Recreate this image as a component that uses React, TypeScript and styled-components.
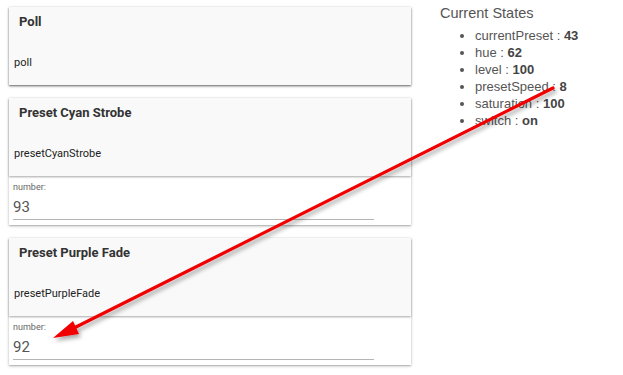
import styled, { createGlobalStyle } from "styled-components";

const GlobalStyle = createGlobalStyle`
  body {
    margin: 0;
    background: #ffffff;
    font-family: Roboto, "Liberation Sans", sans-serif;
  }
`;

const commands = [
  { title: "Poll", name: "poll" },
  { title: "Preset Cyan Strobe", name: "presetCyanStrobe", value: "93" },
  { title: "Preset Purple Fade", name: "presetPurpleFade", value: "92" },
];

const states = [
  { key: "currentPreset", value: "43" },
  { key: "hue", value: "62" },
  { key: "level", value: "100" },
  { key: "presetSpeed", value: "8" },
  { key: "saturation", value: "100" },
  { key: "switch", value: "on" },
];

const App = () => {
  return (
    <StPage>
      <GlobalStyle />
      <StCommands>
        {commands.map((cmd) => (
          <StCard key={cmd.name}>
            <StCardHeader>
              <StTitle>{cmd.title}</StTitle>
              <StName>{cmd.name}</StName>
            </StCardHeader>
            {cmd.value && (
              <StField>
                <StLabel>number:</StLabel>
                <StInput>{cmd.value}</StInput>
              </StField>
            )}
          </StCard>
        ))}
      </StCommands>
      <StStates>
        <StStatesTitle>Current States</StStatesTitle>
        <StList>
          {states.map((s) => (
            <li key={s.key}>
              {s.key} : <b>{s.value}</b>
            </li>
          ))}
        </StList>
      </StStates>
      <StArrow width="623" height="375" viewBox="0 0 623 375">
        <defs>
          <filter id="arrowShadow" x="-10%" y="-10%" width="120%" height="130%">
            <feDropShadow dx="2" dy="3" stdDeviation="2" floodColor="#000" floodOpacity="0.35" />
          </filter>
        </defs>
        <g filter="url(#arrowShadow)">
          <line x1="553" y1="88" x2="68" y2="331" stroke="#f00000" strokeWidth="3.2" strokeLinecap="round" />
          <polygon points="53,338 73,321 79,334" fill="#f00000" />
        </g>
      </StArrow>
    </StPage>
  );
};

export default App;

const StPage = styled.div`
  position: relative;
  display: flex;
  align-items: flex-start;
  width: 623px;
  height: 375px;
  overflow: hidden;
`;

const StCommands = styled.div`
  display: flex;
  flex-direction: column;
  gap: 13px;
  width: 402px;
  margin: 7px 0 0 9px;
`;

const StCard = styled.div`
  background: #ffffff;
  box-shadow: 0 1px 3px rgba(0, 0, 0, 0.25), 0 1px 1px rgba(0, 0, 0, 0.12);
`;

const StCardHeader = styled.div`
  background: #f9f9f9;
  padding: 7px 5px 15px;
  box-shadow: 0 1px 2px rgba(0, 0, 0, 0.35);
`;

const StTitle = styled.div`
  margin-left: 5px;
  font-size: 13px;
  line-height: 16px;
  font-weight: 700;
  color: #333333;
`;

const StName = styled.div`
  margin-top: 26px;
  font-size: 11px;
  line-height: 14px;
  color: #222222;
`;

const StField = styled.div`
  padding: 6px 4px 5px;
`;

const StLabel = styled.div`
  font-size: 9px;
  line-height: 11px;
  color: #666666;
`;

const StInput = styled.div`
  width: 361px;
  margin-top: 5px;
  padding-bottom: 3px;
  border-bottom: 1px solid #b5b5b5;
  font-size: 15px;
  line-height: 18px;
  color: #555555;
`;

const StStates = styled.div`
  margin: 4px 0 0 29px;
  font-family: "Liberation Sans", Arial, sans-serif;
  color: #555555;
`;

const StStatesTitle = styled.div`
  font-size: 14.5px;
  line-height: 18px;
`;

const StList = styled.ul`
  margin: 5px 0 0;
  padding-left: 35px;
  font-size: 13px;
  line-height: 17px;

  b {
    color: #444444;
  }
`;

const StArrow = styled.svg`
  position: absolute;
  left: 0;
  top: 0;
  pointer-events: none;
`;
